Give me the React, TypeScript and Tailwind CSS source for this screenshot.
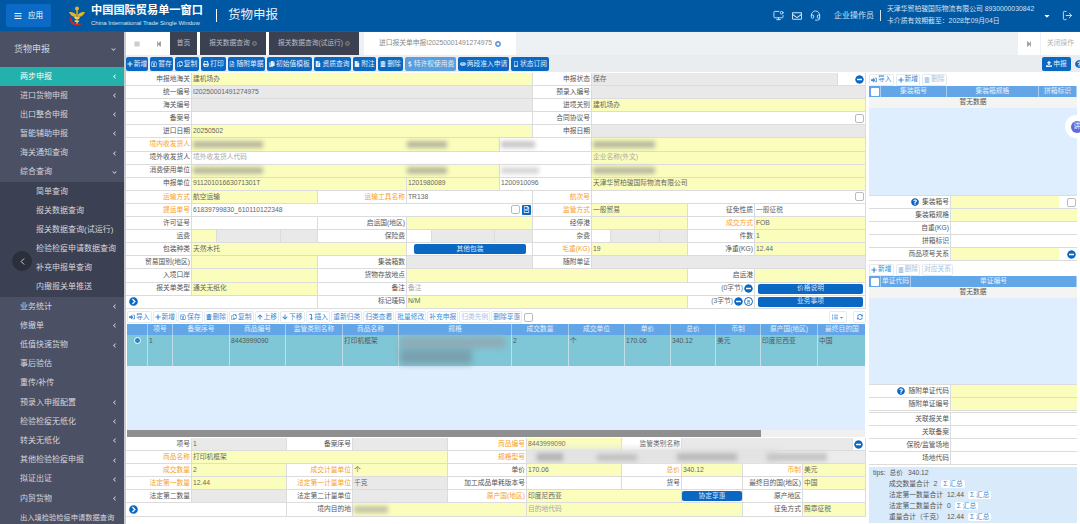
import type { ReactNode } from "react";
import {
	FaPlus,
	FaRegSave,
	FaRegCopy,
	FaPrint,
	FaRegFileAlt,
	FaCopy,
	FaFileAlt,
	FaFile,
	FaTrashAlt,
	FaDollarSign,
	FaEye,
	FaMobileAlt,
	FaUpload,
	FaSignInAlt,
	FaArrowUp,
	FaArrowDown,
	FaQuestionCircle,
	FaMinusCircle,
	FaListUl,
	FaSyncAlt,
	FaBars,
	FaStepBackward,
	FaStepForward,
	FaLevelDownAlt,
	FaCaretDown,
	FaChevronLeft,
	FaChevronDown,
	FaChevronCircleRight,
	FaRegEnvelope,
	FaTimesCircle,
} from "react-icons/fa";
import { LuMonitorDot, LuHeadset, LuLogOut, LuChevronLeft } from "react-icons/lu";

const FONT = "[font-family:'Liberation_Sans','Noto_Sans_CJK_SC',sans-serif]";

const SPANS: Record<number, string> = {
	1: "col-span-1",
	2: "col-span-2",
	3: "col-span-3",
	4: "col-span-4",
	5: "col-span-5",
	6: "col-span-6",
	7: "col-span-7",
	8: "col-span-8",
	9: "col-span-9",
};

const KINDS = {
	l: "bg-white text-[#555] justify-end pr-[1px]",
	o: "bg-white text-[#f7a12a] justify-end pr-[1px]",
	y: "bg-[#fbfdbd] text-[#666]",
	g: "bg-[#e9e9e9] text-[#666]",
	w: "bg-white text-[#666]",
};

type Kind = keyof typeof KINDS;

// one form cell, n = how many grid tracks it covers
function C({
	k,
	n = 1,
	children,
	className = "",
}: {
	k: Kind;
	n?: number;
	children?: ReactNode;
	className?: string;
}) {
	return (
		<div
			className={`${SPANS[n]} ${KINDS[k]} ${className} relative flex items-center whitespace-nowrap border-r border-b border-[#dcdcdc] pl-[1px] text-[6.75px] leading-none`}
		>
			{children}
		</div>
	);
}

function Hint({ children }: { children: ReactNode }) {
	return <span className="text-[#a8a8a8]">{children}</span>;
}

function Smudge({ w, tone = "bg-[#b9b9a0]" }: { w: string; tone?: string }) {
	return <span className={`${w} ${tone} block h-[7px] blur-[2px]`} />;
}

function Check() {
	return <span className="ml-auto mr-[1px] block h-[9px] w-[9px] rounded-[2px] border border-[#bbb] bg-white" />;
}

function Minus({ className = "ml-auto mr-[1px]" }: { className?: string }) {
	return <FaMinusCircle className={`${className} h-[9px] w-[9px] shrink-0 rounded-full text-[#0a67c2]`} />;
}

function Expand() {
	return <FaChevronCircleRight className="ml-[2px] h-[9px] w-[9px] text-[#0a67c2]" />;
}

function WideBtn({ children, className = "" }: { children: ReactNode; className?: string }) {
	return (
		<span
			className={`${className} flex h-[10px] items-center justify-center rounded-[2px] bg-[#0a67c2] text-[6.75px] leading-none text-[#dbe8f5]`}
		>
			{children}
		</span>
	);
}

function MainForm() {
	return (
		<div className="grid auto-rows-[13.1px] grid-cols-[66px_25px_64px_37px_89px_25px_63px_5px_33px_59px_19px_49px_28px_67px_83px_28px]">
			<C k="l">申报地海关</C>
			<C k="y" n={8}>建机场办</C>
			<C k="l">申报状态</C>
			<C k="g" n={5}>保存</C>
			<C k="w"><Minus /></C>

			<C k="l">统一编号</C>
			<C k="g" n={8}>I20250001491274975</C>
			<C k="l">预录入编号</C>
			<C k="g" n={6} />

			<C k="l">海关编号</C>
			<C k="g" n={8} />
			<C k="l">进境关别</C>
			<C k="y" n={6}>建机场办</C>

			<C k="l">备案号</C>
			<C k="w" n={8} />
			<C k="l">合同协议号</C>
			<C k="w" n={6}><Check /></C>

			<C k="l">进口日期</C>
			<C k="y" n={8}>20250502</C>
			<C k="l">申报日期</C>
			<C k="g" n={6} />

			<C k="o">境内收发货人</C>
			<C k="y" n={7}>
				<Smudge w="w-[70px]" />
				<Smudge w="ml-[144px] w-[40px]" />
			</C>
			<C k="w" n={2}><Smudge w="w-[34px]" tone="bg-[#c9c9c9]" /></C>
			<C k="y" n={6}><Smudge w="w-[62px]" /></C>

			<C k="l">境外收发货人</C>
			<C k="w" n={9}><Hint>境外收发货人代码</Hint></C>
			<C k="y" n={6}><Hint>企业名称(外文)</Hint></C>

			<C k="l">消费使用单位</C>
			<C k="y" n={7}>
				<Smudge w="w-[70px]" />
				<Smudge w="ml-[144px] w-[40px]" />
			</C>
			<C k="w" n={2}><Smudge w="w-[38px]" tone="bg-[#d8d8d8]" /></C>
			<C k="y" n={6}><Smudge w="w-[62px]" /></C>

			<C k="l">申报单位</C>
			<C k="y" n={4}>91120101663071301T</C>
			<C k="y" n={3}>1201980089</C>
			<C k="w" n={2}>1200910096</C>
			<C k="y" n={6}>天津华贸柏骏国际物流有限公司</C>

			<C k="o">运输方式</C>
			<C k="y" n={3}>航空运输</C>
			<C k="o">运输工具名称</C>
			<C k="w" n={4}>TR138</C>
			<C k="o">航次号</C>
			<C k="w" n={6}><Check /></C>

			<C k="o">提运单号</C>
			<C k="w" n={8}>
				61839799830_610110122348
				<span className="ml-auto mr-[1px] block h-[9px] w-[9px] rounded-[2px] border border-[#bbb] bg-white" />
				<span className="mr-[1px] ml-[1px] flex h-[10px] w-[9px] items-center justify-center rounded-[1px] bg-[#0a67c2]">
					<FaRegFileAlt className="h-[7px] w-[7px] text-white" />
				</span>
			</C>
			<C k="o">监管方式</C>
			<C k="y" n={3}>一般贸易</C>
			<C k="l">征免性质</C>
			<C k="w" n={2}>一般征税</C>

			<C k="l">许可证号</C>
			<C k="w" n={3} />
			<C k="l">启运国(地区)</C>
			<C k="y" n={4} />
			<C k="l">经停港</C>
			<C k="y" n={3} />
			<C k="o">成交方式</C>
			<C k="y" n={2}>FOB</C>

			<C k="l">运费</C>
			<C k="y" />
			<C k="g" />
			<C k="g" />
			<C k="l">保险费</C>
			<C k="w" />
			<C k="g" />
			<C k="g" n={2} />
			<C k="l">杂费</C>
			<C k="w" />
			<C k="g" />
			<C k="g" />
			<C k="l">件数</C>
			<C k="y" n={2}>1</C>

			<C k="l">包装种类</C>
			<C k="y" n={4}>天然木托</C>
			<C k="w" n={4} className="justify-center">
				<WideBtn className="w-[112px]">其他包装</WideBtn>
			</C>
			<C k="o">毛重(KG)</C>
			<C k="y" n={3}>19</C>
			<C k="l">净重(KG)</C>
			<C k="y" n={2}>12.44</C>

			<C k="l">贸易国别(地区)</C>
			<C k="y" n={3} />
			<C k="l">集装箱数</C>
			<C k="g" n={4} />
			<C k="l">随附单证</C>
			<C k="g" n={6} />

			<C k="l">入境口岸</C>
			<C k="y" n={3} />
			<C k="l">货物存放地点</C>
			<C k="y" n={8} />
			<C k="l">启运港</C>
			<C k="y" n={2} />

			<C k="l">报关单类型</C>
			<C k="y" n={3}>通关无纸化</C>
			<C k="l">备注</C>
			<C k="w" n={9}>
				<Hint>备注</Hint>
				<span className="ml-auto mr-[1px] text-[#666]">(0字节)</span>
				<Minus className="mr-[1px]" />
			</C>
			<C k="w" n={2} className="justify-center">
				<WideBtn className="w-[105px]">价格说明</WideBtn>
			</C>

			<C k="w" n={4}><Expand /></C>
			<C k="l">标记唛码</C>
			<C k="y" n={8}>N/M</C>
			<C k="w">
				<span className="ml-auto mr-[1px] text-[#666]">(3字节)</span>
				<Minus className="mr-[1px]" />
				<span className="mr-[1px] flex h-[9px] w-[9px] shrink-0 items-center justify-center rounded-full border border-[#0a67c2] text-[6px] text-[#0a67c2]">8</span>
			</C>
			<C k="w" n={2} className="justify-center">
				<WideBtn className="w-[105px]">业务事项</WideBtn>
			</C>
		</div>
	);
}

function BottomForm() {
	return (
		<div className="grid auto-rows-[13.1px] grid-cols-[66px_95px_66px_95px_79px_95px_60px_61px_60px_50px_13px]">
			<C k="l">项号</C>
			<C k="g">1</C>
			<C k="l">备案序号</C>
			<C k="g" />
			<C k="o">商品编号</C>
			<C k="y">8443999090</C>
			<C k="l">监管类别名称</C>
			<C k="g" n={3} />
			<C k="w"><Minus className="mr-0" /></C>

			<C k="o">商品名称</C>
			<C k="y" n={3}>打印机框架</C>
			<C k="o">规格型号</C>
			<C k="y" n={6} className="!bg-[#ececec]">
				<span className="absolute -top-[3px] left-[1px] h-[17px] w-[250px] bg-[#e3e3e3] blur-[3px]" />
				<span className="absolute left-[10px] top-[2px] h-[8px] w-[26px] bg-[#b5b5b5] blur-[2px]" />
				<span className="absolute left-[70px] top-[3px] h-[7px] w-[40px] bg-[#c2c2c2] blur-[2px]" />
				<span className="absolute left-[150px] top-[2px] h-[8px] w-[60px] bg-[#bcbcbc] blur-[2px]" />
				<span className="absolute left-[240px] top-[2px] h-[8px] w-[60px] bg-[#c6c6c6] blur-[2px]" />
			</C>

			<C k="o">成交数量</C>
			<C k="y">2</C>
			<C k="o">成交计量单位</C>
			<C k="y">个</C>
			<C k="l">单价</C>
			<C k="y">170.06</C>
			<C k="o">总价</C>
			<C k="y">340.12</C>
			<C k="o">币制</C>
			<C k="y" n={2}>美元</C>

			<C k="o">法定第一数量</C>
			<C k="y">12.44</C>
			<C k="o">法定第一计量单位</C>
			<C k="g">千克</C>
			<C k="l">加工成品单耗版本号</C>
			<C k="w" />
			<C k="l">货号</C>
			<C k="w" />
			<C k="l">最终目的国(地区)</C>
			<C k="y" n={2}>中国</C>

			<C k="l">法定第二数量</C>
			<C k="g" />
			<C k="l">法定第二计量单位</C>
			<C k="g" />
			<C k="o">原产国(地区)</C>
			<C k="y" n={2}>印度尼西亚</C>
			<C k="w" className="!pl-0">
				<WideBtn className="w-[60px]">协定享惠</WideBtn>
			</C>
			<C k="l">原产地区</C>
			<C k="w" n={2} />

			<C k="w" n={2}><Expand /></C>
			<C k="l">境内目的地</C>
			<C k="y" n={2}>
				<Smudge w="w-[34px]" tone="bg-[#c4c4aa]" />
			</C>
			<C k="y" n={3}><Hint>目的地代码</Hint></C>
			<C k="l">征免方式</C>
			<C k="y" n={2}>照章征税</C>
		</div>
	);
}

function Side({ k = "l", value = "y", label, children }: { k?: Kind; value?: Kind; label: ReactNode; children?: ReactNode }) {
	return (
		<div className="flex h-[13px]">
			<div className={`${KINDS[k]} flex w-[82px] items-center whitespace-nowrap border-r border-b border-[#dcdcdc] text-[6.75px] leading-none`}>
				{label}
			</div>
			<div className={`${KINDS[value]} flex flex-1 items-center border-b border-[#dcdcdc] text-[6.75px]`}>{children}</div>
		</div>
	);
}

function Ghost({ icon, children, muted }: { icon?: ReactNode; children: ReactNode; muted?: boolean }) {
	return (
		<span
			className={`${muted ? "text-[#a3c4e4]" : "text-[#3c8bd4]"} flex h-[12px] shrink-0 items-center gap-[1px] whitespace-nowrap rounded-[2px] border border-[#e6eaee] bg-white px-[1px] text-[6.75px] leading-none`}
		>
			{icon}
			{children}
		</span>
	);
}

function Solid({ icon, children, w, muted }: { icon: ReactNode; children: ReactNode; w: string; muted?: boolean }) {
	return (
		<span
			className={`${w} ${muted ? "bg-[#5a9edb]" : "bg-[#0a67c2]"} flex h-[14px] shrink-0 items-center justify-center gap-[1px] whitespace-nowrap rounded-[2px] text-[6.75px] leading-none text-[#e5eef7]`}
		>
			{icon}
			{children}
		</span>
	);
}

const ic = "h-[6px] w-[6px] shrink-0";

const MENU_TOP: [string, "left" | "down"][] = [
	["进口货物申报", "left"],
	["出口整合申报", "left"],
	["暂能辅助申报", "left"],
	["海关通知查询", "left"],
	["综合查询", "down"],
];
const MENU_SUB = ["简单查询", "报关数据查询", "报关数据查询(试运行)", "检验检疫申请数据查询", "补充申报单查询", "内撤报关单推送"];
const MENU_BOTTOM: [string, boolean][] = [
	["业务统计", true],
	["修撤单", true],
	["低值快速货物", true],
	["事后验估", false],
	["重传/补传", false],
	["预录入申报配置", true],
	["检验检疫无纸化", true],
	["转关无纸化", true],
	["其他检验检疫申报", true],
	["拟证出证", true],
	["内贸货物", true],
];

function MenuRow({ label, chevron }: { label: string; chevron?: "left" | "down" }) {
	return (
		<div className="flex h-[19.2px] shrink-0 items-center justify-between pl-[20px] pr-[7px] whitespace-nowrap text-[8px] leading-none">
			<span>{label}</span>
			{chevron === "left" && <FaChevronLeft className="h-[5px] w-[5px]" />}
			{chevron === "down" && <FaChevronDown className="h-[5px] w-[5px]" />}
		</div>
	);
}

function Sidebar() {
	return (
		<aside className="relative flex w-[124px] shrink-0 flex-col overflow-hidden bg-[#4b5064] text-[#d4d6dc]">
			<div className="flex h-[35px] shrink-0 items-center justify-between pl-[14px] pr-[8px] text-[9px] leading-none">
				<span>货物申报</span>
				<FaChevronDown className="h-[5px] w-[5px]" />
			</div>
			<div className="flex h-[19px] shrink-0 items-center justify-between bg-[#22b1ab] pl-[20px] pr-[7px] text-[8px] leading-none text-white">
				<span>两步申报</span>
				<FaChevronLeft className="h-[5px] w-[5px]" />
			</div>
			{MENU_TOP.map(([label, dir]) => (
				<MenuRow key={label} label={label} chevron={dir} />
			))}
			<div className="shrink-0 bg-[#3b4052]">
				{MENU_SUB.map((label) => (
					<div key={label} className="flex h-[19.2px] items-center whitespace-nowrap pl-[36px] text-[8px] leading-none">
						{label}
					</div>
				))}
			</div>
			{MENU_BOTTOM.map(([label, more]) => (
				<MenuRow key={label} label={label} chevron={more ? "left" : undefined} />
			))}
			<div className="flex h-[19.2px] shrink-0 items-center whitespace-nowrap pl-[20px] text-[7.25px] leading-none">出入境检验检疫申请数据查询</div>
			<span className="absolute left-[12px] top-[219px] flex h-[20px] w-[20px] items-center justify-center rounded-full bg-[#2b2f3c]">
				<LuChevronLeft className="h-[11px] w-[11px] text-[#d8dade]" />
			</span>
		</aside>
	);
}

function Logo() {
	return (
		<svg viewBox="0 0 18 22" className="h-[22px] w-[18px] shrink-0">
			<path d="M1 7c3 0 5 .5 7 2.500V12C5 12 2 10 1 7z" fill="#e6b422" />
			<path d="M17 7c-3 0-5 .5-7 2.500V12c3 0 6-2 7-5z" fill="#e6b422" />
			<circle cx="9" cy="3.500" r="2" fill="#e6b422" />
			<rect x="8.300" y="3" width="1.400" height="17" fill="#e6b422" />
			<path d="M6 12c2-.5 4 .5 6 0l-1 2c-2 .5-3 0-4 0zM6.500 15.500c2-.5 3.500.5 5 0l-1 1.600c-1.500.4-2.500 0-3.500 0z" fill="#f1cf55" />
			<path d="M3 11c-2.500 4-.5 9 5 9.500 3 .2 5.500-1 7-2.500-3 1.300-6 1.300-8.500 0C3.500 16.500 3 13.500 3 11z" fill="#d8232a" />
		</svg>
	);
}

function Header() {
	return (
		<header className="flex h-[32px] shrink-0 items-center border-b border-[#0a5fa8] bg-[#0058a2] text-white">
			<div className="ml-[6px] flex h-[23px] w-[45px] items-center justify-center gap-[6px] rounded-[2px] bg-[#0a6ac6] text-[7.5px] leading-none">
				<FaBars className="h-[8px] w-[8px]" />
				<span>应用</span>
			</div>
			<div className="ml-[17px]"><Logo /></div>
			<div className="ml-[5px] flex w-[122px] flex-col gap-[3px]">
				<span className="whitespace-nowrap text-[11.2px] font-bold leading-none">中国国际贸易单一窗口</span>
				<span className="whitespace-nowrap text-[6px] leading-none text-[#d8e6f2]">China International Trade Single Window</span>
			</div>
			<span className="ml-[3px] h-[13px] w-[1px] bg-white" />
			<span className="ml-[11px] text-[12.5px] leading-none text-[#e7eff7]">货物申报</span>
			<div className="ml-auto flex items-center text-[#d4e3f1]">
				<LuMonitorDot className="h-[11px] w-[11px]" />
				<FaRegEnvelope className="ml-[8px] h-[10px] w-[10px]" />
				<LuHeadset className="ml-[8px] h-[11px] w-[11px]" />
				<span className="ml-[13px] whitespace-nowrap text-[8px] leading-none">企业操作员</span>
				<span className="ml-[6px] h-[11px] w-[1px] bg-[#d4e3f1]" />
				<div className="ml-[6px] flex w-[152px] flex-col gap-[5px] whitespace-nowrap text-[6.85px] leading-none">
					<span>天津华贸柏骏国际物流有限公司 8930000030842</span>
					<span>卡介质有效期截至：2028年09月04日</span>
				</div>
				<FaCaretDown className="ml-[4px] h-[8px] w-[8px] text-white" />
				<LuLogOut className="ml-[11px] mr-[7px] h-[11px] w-[11px]" />
			</div>
		</header>
	);
}

function DarkTab({ w, children }: { w: string; children: ReactNode }) {
	return (
		<div className={`${w} flex h-full shrink-0 items-center justify-center gap-[2px] whitespace-nowrap bg-[#3b4150] text-[6.75px] leading-none text-[#b9bcc4]`}>
			{children}
		</div>
	);
}

function Tabs() {
	return (
		<div className="flex h-[23px] shrink-0 items-stretch bg-[#eef1f3]">
			<div className="flex w-[21px] items-center justify-center bg-white">
				<FaBars className="h-[6px] w-[6px] text-[#999]" />
			</div>
			<div className="flex w-[23px] items-center justify-center bg-white">
				<FaStepBackward className="h-[6px] w-[6px] text-[#999]" />
			</div>
			<DarkTab w="w-[27px]">首页</DarkTab>
			<span className="w-[3px] bg-white" />
			<DarkTab w="w-[66px]">
				报关数据查询
				<FaTimesCircle className="h-[5px] w-[5px] text-[#777]" />
			</DarkTab>
			<span className="w-[3px] bg-white" />
			<DarkTab w="w-[90px]">
				报关数据查询(试运行)
				<FaTimesCircle className="h-[5px] w-[5px] text-[#777]" />
			</DarkTab>
			<div className="ml-[5px] flex w-[152px] items-center justify-center gap-[3px] whitespace-nowrap bg-white text-[6.75px] leading-none text-[#8a8a8a]">
				进口报关单申报I20250001491274975
				<FaTimesCircle className="h-[6px] w-[6px] text-[#5b8fd6]" />
			</div>
			<div className="ml-auto flex w-[22px] items-center justify-center bg-white">
				<FaStepForward className="h-[6px] w-[6px] text-[#999]" />
			</div>
			<div className="ml-[1px] flex w-[39px] items-center justify-center whitespace-nowrap bg-white text-[6.75px] leading-none text-[#b0b0b0]">
				关闭操作
			</div>
		</div>
	);
}

function Toolbar() {
	return (
		<div className="flex h-[17px] shrink-0 items-center gap-[2px] bg-[#e9edf0] pt-[1px]">
			<Solid w="w-[22px]" icon={<FaPlus className={ic} />}>新增</Solid>
			<Solid w="w-[23px]" icon={<FaRegSave className={ic} />}>暂存</Solid>
			<Solid w="w-[24px]" icon={<FaRegCopy className={ic} />}>复制</Solid>
			<Solid w="w-[25px]" icon={<FaPrint className={ic} />}>打印</Solid>
			<Solid w="w-[37px]" icon={<FaRegFileAlt className={ic} />}>随附单据</Solid>
			<Solid w="w-[45px]" icon={<FaCopy className={ic} />}>初始值模板</Solid>
			<Solid w="w-[37px]" icon={<FaFileAlt className={ic} />}>资质查询</Solid>
			<Solid w="w-[23px]" icon={<FaFile className={ic} />}>附注</Solid>
			<Solid w="w-[25px]" icon={<FaTrashAlt className={ic} />}>删除</Solid>
			<Solid w="w-[51px]" muted icon={<FaDollarSign className={ic} />}>特许权使用费</Solid>
			<Solid w="w-[51px]" icon={<FaEye className={ic} />}>两段准入申请</Solid>
			<Solid w="w-[38px]" icon={<FaMobileAlt className={ic} />}>状态订阅</Solid>
			<div className="ml-auto flex items-center gap-[1px]">
				<Solid w="w-[29px]" icon={<FaUpload className={ic} />}>申报</Solid>
				<FaQuestionCircle className="h-[8px] w-[8px] translate-x-[3px] text-[#0a67c2]" />
			</div>
		</div>
	);
}

function GoodsTable() {
	const heads = ["", "项号", "备案序号", "商品编号", "监管类别名称", "商品名称", "规格", "成交数量", "成交单位", "单价", "总价", "币制", "原产国(地区)", "最终目的国"];
	const row = ["", "1", "", "8443999090", "", "打印机框架", "", "2", "个", "170.06", "340.12", "美元", "印度尼西亚", "中国"];
	const grid = "grid grid-cols-[21px_25px_57px_56px_57px_56px_113px_57px_56px_46px_45px_45px_57px_49px]";
	return (
		<div className="mx-[1px] flex flex-1 flex-col overflow-hidden bg-[#deeefe]">
			<div className={`${grid} h-[11px] bg-[#62a6e8] text-[6.75px] leading-none text-[#e6f0fa]`}>
				{heads.map((h, i) => (
					<span key={i} className="flex items-center justify-center whitespace-nowrap border-r border-[#a9cdf0]">{h}</span>
				))}
			</div>
			<div className={`${grid} h-[31px] bg-[#7fc7d6] text-[6.75px] leading-none text-[#555]`}>
				{row.map((v, i) => (
					<span key={i} className="relative whitespace-nowrap border-r border-[#bfe0e8] pl-[1px] pt-[3px]">
						{i === 0 && <span className="absolute left-[7px] top-[2px] h-[7px] w-[7px] rounded-full border border-[#fff] bg-[#2f7fd0]" />}
						{i === 6 ? (
							<>
								<span className="absolute left-[1px] top-[2px] h-[11px] w-[105px] bg-[#8fabb6] blur-[3px]" />
								<span className="absolute left-[1px] top-[14px] h-[15px] w-[72px] bg-[#79a0ae] blur-[3px]" />
							</>
						) : (
							v
						)}
					</span>
				))}
			</div>
		</div>
	);
}

function Tips() {
	const lines: [string, string][] = [
		["成交数量合计", "2"],
		["法定第一数量合计", "12.44"],
		["法定第二数量合计", "0"],
		["重量合计（千克）", "12.44"],
	];
	return (
		<div className="mt-[2px] h-[56px] bg-[#d9eafa] pl-[4px] pt-[2px] text-[6.75px] leading-none text-[#555]">
			<div className="flex h-[8px] items-center gap-[4px]">
				<span>tips:</span>
				<span>总价</span>
				<span className="ml-[1px]">340.12</span>
			</div>
			{lines.map(([label, value]) => (
				<div key={label} className="mt-[3px] flex h-[8px] items-center gap-[4px] pl-[16px]">
					<span>{label}</span>
					<span>{value}</span>
					<span className="rounded-[2px] bg-white px-[2px] py-[1px] text-[#3c8bd4]">Σ 汇总</span>
				</div>
			))}
		</div>
	);
}

function RightPanel() {
	const head = "flex items-center justify-center border-r border-[#a9cdf0] whitespace-nowrap";
	return (
		<div className="ml-[3px] flex w-[208px] shrink-0 flex-col">
			<div className="flex h-[13px] items-center gap-[2px]">
				<Ghost icon={<FaSignInAlt className={ic} />}>导入</Ghost>
				<Ghost icon={<FaPlus className={ic} />}>新增</Ghost>
				<Ghost muted icon={<FaTrashAlt className={ic} />}>删除</Ghost>
			</div>
			<div className="grid h-[11px] grid-cols-[12px_66px_92px_38px] bg-[#62a6e8] text-[6.75px] leading-none text-[#e6f0fa]">
				<span className="flex items-center justify-center border-r border-[#a9cdf0]"><span className="h-[8px] w-[8px] rounded-[1px] bg-white" /></span>
				<span className={head}>集装箱号</span>
				<span className={head}>集装箱规格</span>
				<span className={head}>拼箱标识</span>
			</div>
			<div className="flex h-[11px] items-center justify-center bg-[#f4f4f2] text-[6.75px] leading-none text-[#555]">暂无数据</div>
			<div className="h-[87px] bg-[#deeefe]" />
			<div className="border-t border-[#dcdcdc]">
				<Side label={<><FaQuestionCircle className="mr-[3px] h-[8px] w-[8px] text-[#0a67c2]" />集装箱号</>}>
					<span className="h-full w-[108px] bg-[#fbfdbd]" />
					<span className="flex h-full flex-1 items-center bg-white"><Check /></span>
				</Side>
				<Side label="集装箱规格" />
				<Side label="自重(KG)" value="w" />
				<Side label="拼箱标识" value="w" />
				<Side label="商品项号关系">
					<span className="h-full w-[108px] bg-[#fbfdbd]" />
					<span className="flex h-full flex-1 items-center bg-white"><Minus /></span>
				</Side>
			</div>
			<div className="mt-[2px] flex h-[13px] items-center gap-[2px]">
				<Ghost icon={<FaPlus className={ic} />}>新增</Ghost>
				<Ghost muted icon={<FaTrashAlt className={ic} />}>删除</Ghost>
				<Ghost muted>对应关系</Ghost>
			</div>
			<div className="grid h-[11px] grid-cols-[12px_30px_166px] bg-[#62a6e8] text-[6.75px] leading-none text-[#e6f0fa]">
				<span className="flex items-center justify-center border-r border-[#a9cdf0]"><span className="h-[8px] w-[8px] rounded-[1px] bg-white" /></span>
				<span className={head}>单证代码</span>
				<span className={head}>单证编号</span>
			</div>
			<div className="flex h-[11px] items-center justify-center bg-[#f4f4f2] text-[6.75px] leading-none text-[#555]">暂无数据</div>
			<div className="h-[86px] bg-[#deeefe]" />
			<div className="border-t border-[#dcdcdc]">
				<Side label={<><FaQuestionCircle className="mr-[3px] h-[8px] w-[8px] text-[#0a67c2]" />随附单证代码</>} />
				<Side label="随附单证编号" />
			</div>
			<div className="mt-[1px] border-t border-[#dcdcdc]">
				<Side label="关联报关单" value="w" />
				<Side label="关联备案" value="w" />
				<Side label="保税/监管场地" value="w" />
				<Side label="场地代码" value="w" />
			</div>
			<Tips />
		</div>
	);
}

export default function App() {
	return (
		<div className={`${FONT} relative flex h-[524px] w-[1080px] flex-col overflow-hidden bg-white`}>
			<Header />
			<div className="flex min-h-0 flex-1">
				<Sidebar />
				<span className="w-[2px] shrink-0 bg-[#c8cbd2]" />
				<main className="flex min-w-0 flex-1 flex-col">
					<Tabs />
					<Toolbar />
					<div className="flex min-h-0 flex-1 pt-[1px]">
						<div className="flex w-[740px] shrink-0 flex-col">
							<MainForm />
							<div className="mt-[2px] flex h-[13px] shrink-0 items-center gap-[1px] pl-[1px]">
								<Ghost icon={<FaSignInAlt className={ic} />}>导入</Ghost>
								<Ghost icon={<FaPlus className={ic} />}>新增</Ghost>
								<Ghost icon={<FaRegSave className={ic} />}>保存</Ghost>
								<Ghost icon={<FaTrashAlt className={ic} />}>删除</Ghost>
								<Ghost icon={<FaRegCopy className={ic} />}>复制</Ghost>
								<Ghost icon={<FaArrowUp className={ic} />}>上移</Ghost>
								<Ghost icon={<FaArrowDown className={ic} />}>下移</Ghost>
								<Ghost icon={<FaLevelDownAlt className={ic} />}>插入</Ghost>
								<Ghost>重新归类</Ghost>
								<Ghost>归类查看</Ghost>
								<Ghost>批量修改</Ghost>
								<Ghost>补充申报</Ghost>
								<Ghost muted>归类先例</Ghost>
								<Ghost>删除享惠</Ghost>
								<span className="ml-[1px] h-[9px] w-[9px] shrink-0 rounded-[2px] border border-[#bbb] bg-white" />
								<span className="ml-auto flex h-[12px] w-[18px] items-center justify-center gap-[1px] rounded-[2px] border border-[#e6eaee] text-[#3c8bd4]">
									<FaListUl className="h-[6px] w-[6px]" />
									<FaCaretDown className="h-[5px] w-[5px]" />
								</span>
								<span className="ml-[5px] flex h-[12px] w-[13px] items-center justify-center rounded-[2px] border border-[#e6eaee] text-[#3c8bd4]">
									<FaSyncAlt className="h-[6px] w-[6px]" />
								</span>
							</div>
							<GoodsTable />
							<div className="mx-[1px] flex h-[7px] shrink-0 bg-[#f0f0f0]">
								<span className="w-[634px] bg-[#8f8f8f]" />
							</div>
							<div className="mt-[1px] h-[86px] shrink-0">
								<BottomForm />
							</div>
						</div>
						<RightPanel />
					</div>
				</main>
			</div>
			<span className="absolute left-[1065px] top-[115px] flex h-[23px] w-[30px] items-center rounded-full bg-white pl-[6px]">
				<span className="flex h-[12px] w-[12px] items-center justify-center rounded-full bg-[#6366e0] text-[6.75px] leading-none text-white">讲</span>
			</span>
		</div>
	);
}
